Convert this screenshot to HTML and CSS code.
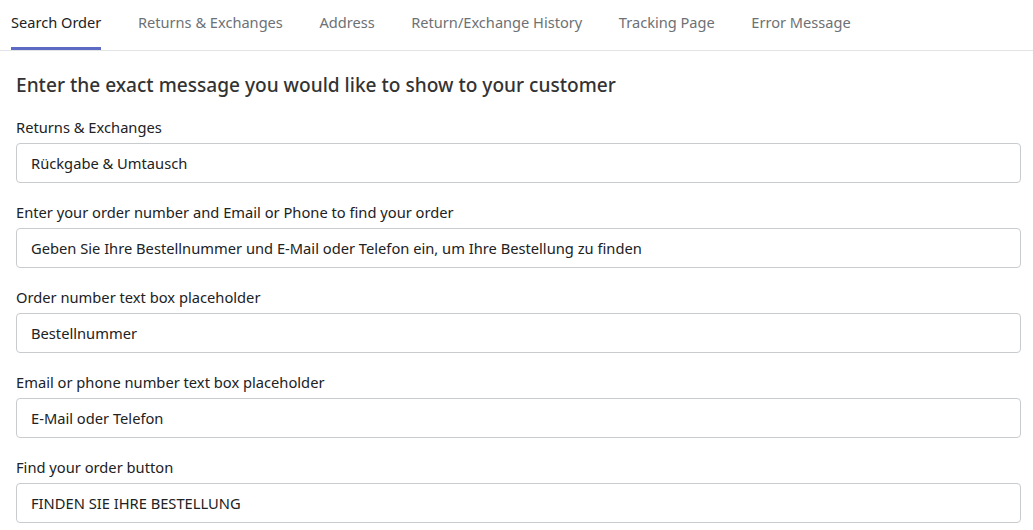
FILE: index.html
```html
<!DOCTYPE html>
<html>
<head>
<meta charset="utf-8">
<link rel="stylesheet" href="styles.css">
</head>
<body>
<nav class="tabs">
  <div class="tab active">Search Order</div>
  <div class="tab">Returns &amp; Exchanges</div>
  <div class="tab">Address</div>
  <div class="tab">Return/Exchange History</div>
  <div class="tab">Tracking Page</div>
  <div class="tab">Error Message</div>
</nav>
<main class="content">
  <h2 class="title">Enter the exact message you would like to show to your customer</h2>
  <div class="field">
    <label class="label">Returns &amp; Exchanges</label>
    <div class="input">Rückgabe &amp; Umtausch</div>
  </div>
  <div class="field">
    <label class="label">Enter your order number and Email or Phone to find your order</label>
    <div class="input">Geben Sie Ihre Bestellnummer und E-Mail oder Telefon ein, um Ihre Bestellung zu finden</div>
  </div>
  <div class="field">
    <label class="label">Order number text box placeholder</label>
    <div class="input">Bestellnummer</div>
  </div>
  <div class="field">
    <label class="label">Email or phone number text box placeholder</label>
    <div class="input">E-Mail oder Telefon</div>
  </div>
  <div class="field">
    <label class="label">Find your order button</label>
    <div class="input">FINDEN SIE IHRE BESTELLUNG</div>
  </div>
</main>
</body>
</html>
```
FILE: styles.css
```css
* { box-sizing: border-box; }
body {
  margin: 0;
  background: #fff;
  font-family: "Noto Sans", "Open Sans", sans-serif;
  color: #202223;
}
.tabs {
  display: flex;
  gap: 36.6px;
  padding-left: 11px;
  border-bottom: 1px solid #e1e3e5;
  height: 51px;
}
.tab {
  font-size: 14.6px;
  line-height: 20px;
  padding-top: 12px;
  color: #6d7175;
  border-bottom: 3px solid transparent;
  height: 50px;
}
.tab.active {
  color: #202223;
  border-bottom-color: #5c6ac4;
}
.content {
  padding: 22px 12px 0 16px;
}
.title {
  margin: 0 0 20px;
  font-size: 19.1px;
  line-height: 24px;
  font-weight: 500;
  color: #333;
}
.field {
  display: flex;
  flex-direction: column;
  gap: 6px;
  margin-bottom: 19px;
}
.label {
  font-size: 14.7px;
  line-height: 20px;
  height: 20px;
  color: #202223;
}
.input {
  height: 40px;
  border: 1px solid #c9cccf;
  border-radius: 4px;
  padding: 1px 14px 0;
  font-size: 14.7px;
  line-height: 37px;
  color: #202223;
}
```
